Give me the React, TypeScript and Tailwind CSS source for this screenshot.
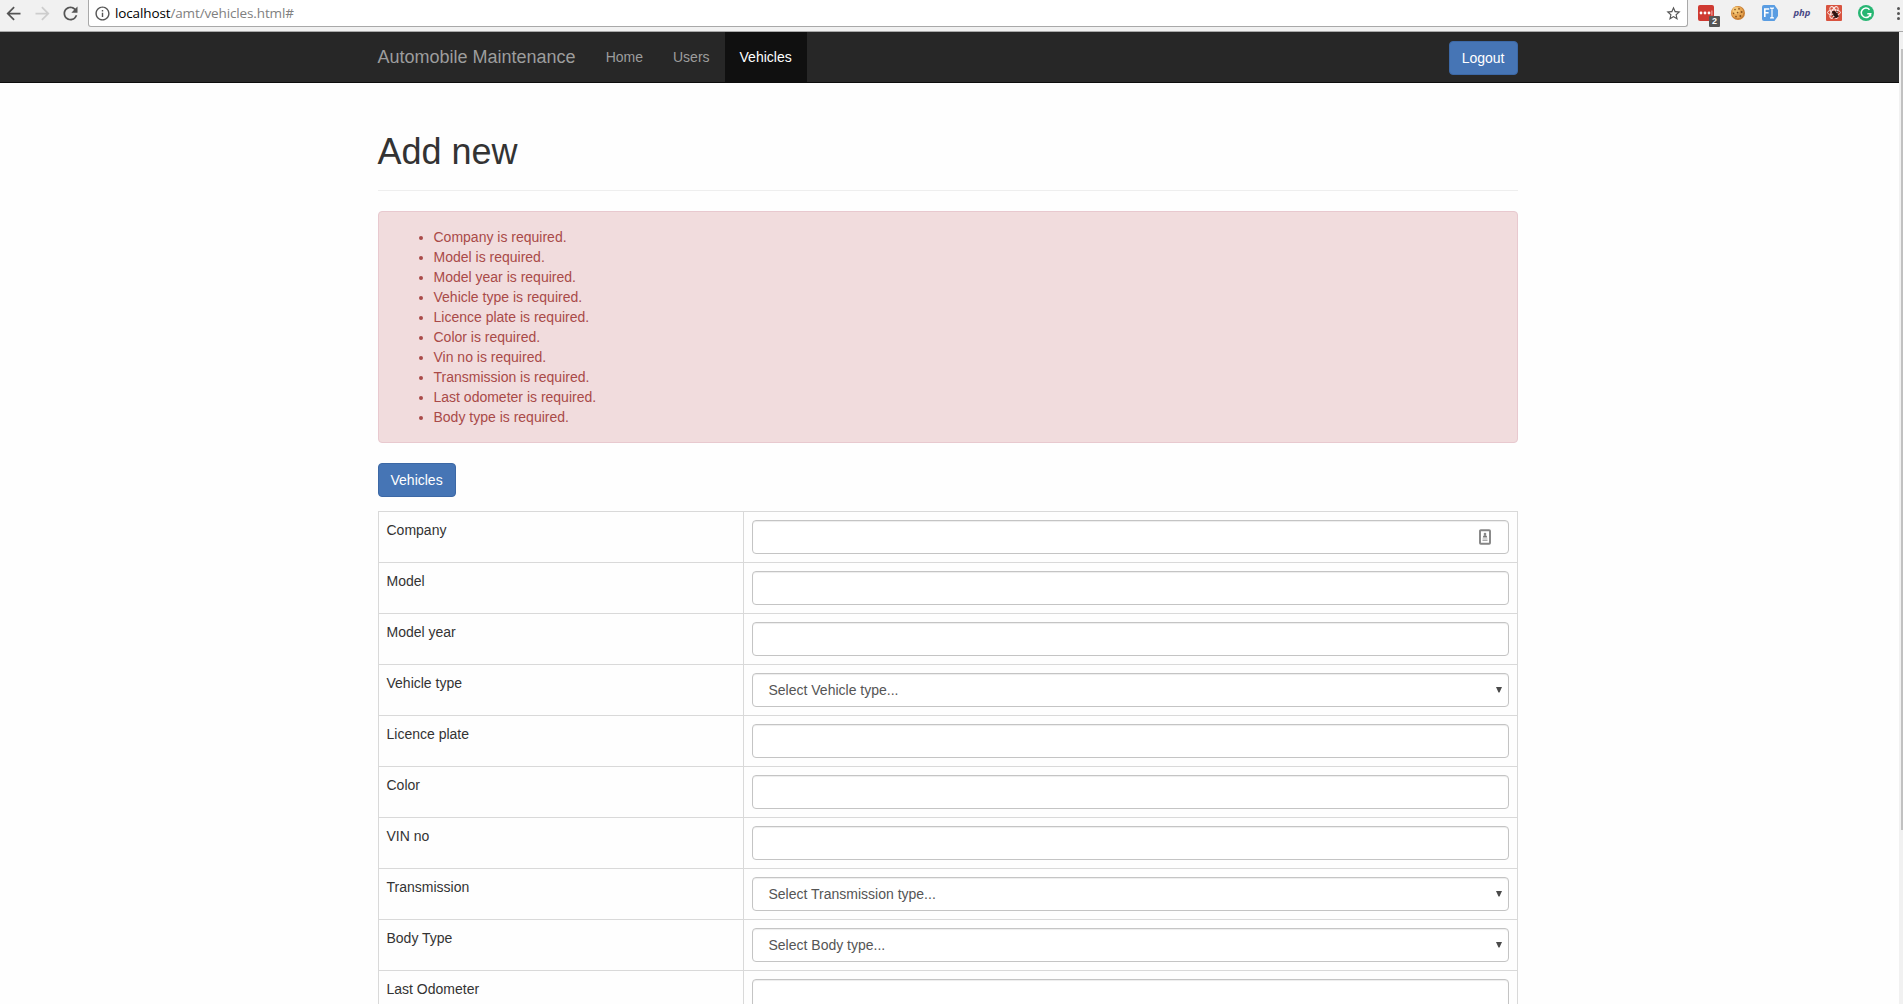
import React from "react";
import { MdArrowBack, MdArrowForward, MdRefresh, MdInfoOutline, MdStarBorder } from "react-icons/md";

const errors = [
  "Company is required.",
  "Model is required.",
  "Model year is required.",
  "Vehicle type is required.",
  "Licence plate is required.",
  "Color is required.",
  "Vin no is required.",
  "Transmission is required.",
  "Last odometer is required.",
  "Body type is required.",
];

type Field = { label: string; select?: string; contact?: boolean };

const fields: Field[] = [
  { label: "Company", contact: true },
  { label: "Model" },
  { label: "Model year" },
  { label: "Vehicle type", select: "Select Vehicle type..." },
  { label: "Licence plate" },
  { label: "Color" },
  { label: "VIN no" },
  { label: "Transmission", select: "Select Transmission type..." },
  { label: "Body Type", select: "Select Body type..." },
  { label: "Last Odometer" },
];

function PasswordIcon() {
  return (
    <div className="relative h-4 w-4 rounded-[2px] bg-[#cf3a32]">
      <svg viewBox="0 0 16 16" className="h-4 w-4">
        <circle cx="3" cy="8" r="1.4" fill="#fff" />
        <circle cx="7" cy="8" r="1.4" fill="#fff" />
        <circle cx="11" cy="8" r="1.4" fill="#fff" />
        <rect x="13.4" y="5.5" width="1" height="5" fill="#f0b4b0" />
      </svg>
      <span className="absolute top-[11px] left-[11px] flex h-[11px] w-[11px] items-center justify-center rounded-[1px] bg-[#555] text-[9px] leading-none font-bold text-white">
        2
      </span>
    </div>
  );
}

function CookieIcon() {
  return (
    <svg viewBox="0 0 16 16" className="h-4 w-4">
      <circle cx="8" cy="8" r="7" fill="#c97f33" />
      <circle cx="7.4" cy="7.2" r="6" fill="#e6a552" />
      <circle cx="6.2" cy="5.6" r="3.6" fill="#f5c878" />
      <g fill="#86501d">
        <circle cx="5" cy="4.6" r=".8" />
        <circle cx="9" cy="3.8" r=".9" />
        <circle cx="3.6" cy="8.4" r=".8" />
        <circle cx="7.6" cy="7.6" r=".9" />
        <circle cx="11.6" cy="7" r="1" />
        <circle cx="6" cy="11.6" r=".9" />
        <circle cx="10.4" cy="11" r="1" />
      </g>
    </svg>
  );
}

function FontIcon() {
  return (
    <svg viewBox="0 0 16 16" className="h-4 w-4">
      <path d="M2 0h10.5L16 5v6l-3.500 5H2a2 2 0 0 1-2-2V2a2 2 0 0 1 2-2z" fill="#5a9de2" />
      <path d="M2.800 12V4H7.200M2.800 7.800H6.600" fill="none" stroke="#fff" strokeWidth="1.600" />
      <path d="M8 3.200h1.300l.7.500.7-.5H12M10 3.500v9M8 12.800h1.300l.7-.5.7.5H12" fill="none" stroke="#fff" strokeWidth="1.200" />
    </svg>
  );
}

function BugIcon() {
  return (
    <svg viewBox="0 0 16 16" className="h-4 w-4">
      <rect width="16" height="16" rx="1" fill="#d8533f" />
      <g fill="none" stroke="#fbe9e6" strokeWidth="1">
        <ellipse cx="8" cy="7.500" rx="6.500" ry="2.600" />
        <ellipse cx="8" cy="7.500" rx="6.500" ry="2.600" transform="rotate(60 8 7.500)" />
        <ellipse cx="8" cy="7.500" rx="6.500" ry="2.600" transform="rotate(120 8 7.500)" />
      </g>
      <circle cx="8" cy="7.2" r="1.500" fill="#2c1512" />
      <ellipse cx="9.800" cy="10" rx="2" ry="3" fill="#2c1512" transform="rotate(-30 9.800 10)" />
      <path d="M6 10.500l6-2M7 13l6-2M7 6l-1 2.500M10 6l2 1" stroke="#2c1512" strokeWidth=".9" />
    </svg>
  );
}

function GrammarIcon() {
  return (
    <svg viewBox="0 0 16 16" className="h-4 w-4">
      <circle cx="8" cy="8" r="8" fill="#27b673" />
      <path d="M11.500 4.700A4.700 4.700 0 1 0 12.600 8.700H9.300" fill="none" stroke="#fff" strokeWidth="1.500" />
      <path d="M12.600 8v3.500" stroke="#fff" strokeWidth="1.300" />
    </svg>
  );
}

function BrowserBar() {
  return (
    <div className="flex h-8 shrink-0 border-b border-[#a9a9a9] bg-[#f1f1f1]">
      <div className="flex h-[26px] w-[88px] shrink-0 items-center gap-[7.500px] pl-[3px]">
        <MdArrowBack size={21} color="#555" />
        <MdArrowForward size={21} color="#cdcdcd" />
        <MdRefresh size={21} color="#555" />
      </div>
      <div className="flex h-[27px] w-[1600px] shrink-0 items-center rounded-b-[3px] border border-t-0 border-[#a9a9a9] bg-white pr-[5px] pl-[4.500px]">
        <MdInfoOutline size={17} color="#555" />
        <div className="ml-[4.500px] grow font-['Open_Sans',sans-serif] text-[13.500px] leading-5 tracking-[-0.130px] text-[#808080]">
          <span className="text-black">localhost</span>/amt/vehicles.html#
        </div>
        <MdStarBorder size={17} color="#555" />
      </div>
      <div className="ml-[2px] grid h-[26px] shrink-0 grid-cols-[repeat(6,32px)] items-center justify-items-center">
        <PasswordIcon />
        <CookieIcon />
        <FontIcon />
        <span className="font-['Open_Sans',sans-serif] text-[9.500px] leading-3 font-bold text-[#4a4a86] italic">php</span>
        <BugIcon />
        <GrammarIcon />
      </div>
      <div className="flex h-[26px] flex-col justify-center gap-[2px] pl-[15px]">
        <span className="h-[3px] w-[3px] rounded-full bg-[#555]" />
        <span className="h-[3px] w-[3px] rounded-full bg-[#555]" />
        <span className="h-[3px] w-[3px] rounded-full bg-[#555]" />
      </div>
    </div>
  );
}

function PrimaryButton({ children }: { children: React.ReactNode }) {
  return (
    <button className="h-[34px] rounded-[4px] border border-[#3c68a5] bg-[#4675b5] px-3 text-sm leading-5 text-white">
      {children}
    </button>
  );
}

function Navbar() {
  return (
    <nav className="h-[51px] border-b border-[#0c0c0c] bg-[#272727]">
      <div className="mx-[377.500px] flex w-[1140px] items-start text-[#9d9d9d]">
        <a className="py-[15px] pr-[15px] text-lg leading-5">Automobile Maintenance</a>
        <a className="p-[15px] text-sm leading-5">Home</a>
        <a className="p-[15px] text-sm leading-5">Users</a>
        <a className="bg-[#101010] p-[15px] text-sm leading-5 text-white">Vehicles</a>
        <div className="mt-[9px] ml-auto flex">
          <PrimaryButton>Logout</PrimaryButton>
        </div>
      </div>
    </nav>
  );
}

function FieldControl({ field }: { field: Field }) {
  return (
    <div className="flex h-[34px] items-center justify-between rounded-[4px] border border-[#c4c4c4] bg-white pr-[6px] pl-4 text-sm leading-5 text-[#555] shadow-[inset_0_1px_1px_rgba(0,0,0,0.075)]">
      <span>{field.select}</span>
      {field.select && (
        <svg viewBox="0 0 6 6" className="h-[6px] w-[6px]">
          <path d="M0 0h6L3.500 5.600H2.500z" fill="#4a4a4a" />
        </svg>
      )}
      {field.contact && (
        <svg viewBox="0 0 12 16" className="mr-[11px] h-4 w-3">
          <rect x="1" y="1.2" width="10" height="13.600" rx=".8" fill="#fff" stroke="#858585" strokeWidth="1.900" />
          <circle cx="6" cy="5" r="1.300" fill="#888" />
          <path d="M3.800 8.500q0-2.500 2.200-2.500t2.200 2.500z" fill="#777" />
          <path d="M3.500 10h5M3.500 11.500h5" stroke="#aaa" strokeWidth="1.200" />
        </svg>
      )}
    </div>
  );
}

export default function App() {
  return (
    <div className="flex h-[1004px] w-[1903px] flex-col overflow-hidden bg-white font-['Liberation_Sans',Arial,sans-serif] text-[#333]">
      <BrowserBar />
      <div className="flex min-h-0 grow">
        <div className="w-[1899px] shrink-0 overflow-hidden bg-[#fefefe]">
          <Navbar />
          <main className="mx-[377.500px] w-[1140px] pt-[49px]">
            <h1 className="mb-5 h-[59px] border-b border-[#eee] text-4xl leading-[1.100] font-normal">Add new</h1>
            <ul className="mb-5 list-disc rounded-[4px] border border-[#e8c9cf] bg-[#f1dcdd] py-[15px] pr-[15px] pl-[55px] text-sm leading-5 text-[#a94a48]">
              {errors.map((e) => (
                <li key={e}>{e}</li>
              ))}
            </ul>
            <PrimaryButton>Vehicles</PrimaryButton>
            <div className="mt-[14px] border border-b-0 border-[#d9d9d9]">
              {fields.map((f) => (
                <div key={f.label} className="grid grid-cols-[365px_1fr] border-b border-[#d9d9d9]">
                  <div className="border-r border-[#d9d9d9] p-2 text-sm leading-5">{f.label}</div>
                  <div className="p-2">
                    <FieldControl field={f} />
                  </div>
                </div>
              ))}
            </div>
          </main>
        </div>
        <div className="w-1 bg-[#f1f1f1] pt-[17px] pl-[2px]">
          <div className="h-[781px] bg-[#c1c1c1]" />
        </div>
      </div>
    </div>
  );
}
